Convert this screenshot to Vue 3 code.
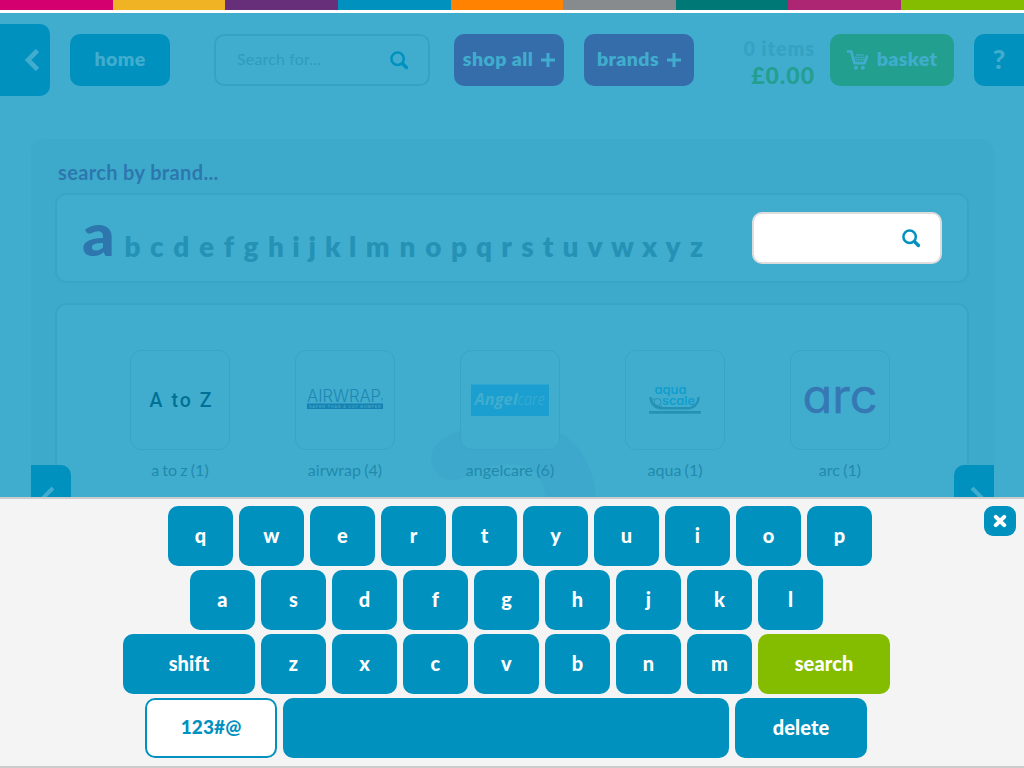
<script setup>
const stripes = ['pink', 'yellow', 'purple', 'blue', 'orange', 'grey', 'teal', 'magenta', 'lime']
const letters = 'bcdefghijklmnopqrstuvwxyz'.split('')
const brands = [
  { id: 'atoz', label: 'a to z (1)' },
  { id: 'airwrap', label: 'airwrap (4)' },
  { id: 'angelcare', label: 'angelcare (6)' },
  { id: 'aqua', label: 'aqua (1)' },
  { id: 'arc', label: 'arc (1)' },
]
const key = (t, cls = '') => ({ t, cls })
const rows = [
  { cls: 'r1', keys: 'qwertyuiop'.split('').map((c) => key(c)) },
  { cls: 'r2', keys: 'asdfghjkl'.split('').map((c) => key(c)) },
  { cls: 'r3', keys: [key('shift', 'wide'), ...'zxcvbnm'.split('').map((c) => key(c)), key('search', 'wide go')] },
  { cls: 'r4', keys: [key('123#@', 'wide alt'), key('', 'space'), key('delete', 'wide')] },
]
</script>

<template>
  <div class="page">
    <div class="stripes"><i v-for="s in stripes" :key="s" :class="s"></i></div>
    <header class="top">
      <button class="back">
        <svg width="16" height="22" viewBox="0 0 16 22"><path d="M13.500 1.500 4 11l9.500 9.500" fill="none" stroke="#40adce" stroke-width="4.6" /></svg>
      </button>
      <button class="btn home"><span>home</span></button>
      <div class="field main-search">
        <span class="ph">Search for...</span>
        <svg class="mag" width="19" height="19" viewBox="0 0 19 19"><circle cx="7.6" cy="7.7" r="6.2" fill="none" stroke="#0091bf" stroke-width="2.5" /><path d="m12.4 12.5 4 4" stroke="#0091bf" stroke-width="3.4" stroke-linecap="round" /></svg>
      </div>
      <button class="btn violet shop"><span>shop all</span><svg width="14" height="14" viewBox="0 0 14 14"><path d="M7 0v14M0 7h14" stroke="#40adce" stroke-width="3" /></svg></button>
      <button class="btn violet brands-btn"><span>brands</span><svg width="14" height="14" viewBox="0 0 14 14"><path d="M7 0v14M0 7h14" stroke="#40adce" stroke-width="3" /></svg></button>
      <div class="totals"><span class="items">0 items</span><span class="sum">£0.00</span></div>
      <button class="btn basket">
        <svg width="22" height="21" viewBox="0 0 22 21">
          <path d="M0 1.500h4.200L7.500 13.200h10L20.300 5.500" fill="none" stroke="#40adce" stroke-width="2.700" />
          <path d="M9 5h8M8 7.400h10M8.700 9.800h8.600" stroke="#40adce" stroke-width="1.500" stroke-dasharray="1.700 .7" />
          <circle cx="9" cy="17.800" r="2" fill="#40adce" /><circle cx="15.800" cy="17.800" r="2" fill="#40adce" />
        </svg>
        <span>basket</span>
      </button>
      <button class="help">?</button>
    </header>

    <main class="panel">
      <h2>search by brand...</h2>
      <section class="box alphabet">
        <b class="current">a</b>
        <div class="letters"><span v-for="l in letters" :key="l">{{ l }}</span></div>
        <div class="field brand-search">
          <svg class="mag" width="19" height="19" viewBox="0 0 19 19"><circle cx="7.6" cy="7.7" r="6.2" fill="none" stroke="#0091bf" stroke-width="2.5" /><path d="m12.4 12.5 4 4" stroke="#0091bf" stroke-width="3.4" stroke-linecap="round" /></svg>
        </div>
      </section>
      <section class="box results">
        <svg class="swirl" width="180" height="90" viewBox="425 415 180 90"><path d="M453 478c-15 0-22-11-22-22 0-14 15-22 30-28 16-6 74-12 100 3 20 12 36 36 36 80h-51c1-30-8-47-28-48-22-2-35 1-48 9q-8 6-17 6Z" fill="#3ea8cc" /></svg>
        <figure v-for="b in brands" :key="b.id">
          <div class="card">
            <svg width="98" height="98" viewBox="1 1 98 98">
              <text v-if="b.id === 'atoz'" class="atoz" x="19.500" y="57" textLength="62">A to Z</text>
              <template v-if="b.id === 'airwrap'">
                <text class="air" x="12" y="51.5" textLength="74" lengthAdjust="spacingAndGlyphs">AIRWRAP</text>
                <text class="tiny" x="86" y="51">®</text>
                <rect x="12" y="53.5" width="76" height="5.5" fill="#1781b3" />
                <text class="slogan" x="14" y="57.9" textLength="72">SAFER THAN A COT BUMPER</text>
              </template>
              <template v-if="b.id === 'angelcare'">
                <rect x="11" y="34.5" width="78" height="31.5" fill="#1b9fd1" />
                <text class="angel" x="14.5" y="54.5" textLength="43" lengthAdjust="spacingAndGlyphs">Angel</text>
                <text class="care" x="57.5" y="54.5" textLength="27" lengthAdjust="spacingAndGlyphs">care</text>
              </template>
              <template v-if="b.id === 'aqua'">
                <text class="aq" x="29.5" y="44" textLength="32" lengthAdjust="spacingAndGlyphs">aqua</text>
                <text class="aq" x="37" y="54.500" textLength="33" lengthAdjust="spacingAndGlyphs">scale</text>
                <path d="M25.5 47c0 7 5 11.300 12 11.300h24c7 0 12-4.300 12-11.300" fill="none" stroke="#2592b5" stroke-width="2.400" />
                <rect x="24" y="61" width="52" height="2.700" fill="#2592b5" />
                <circle cx="32.500" cy="52" r="3.500" fill="none" stroke="#2592b5" stroke-width="1" />
                <path d="M29 48l-2 3M30 55q3 3 7 1" fill="none" stroke="#2592b5" stroke-width="1" />
              </template>
              <text v-if="b.id === 'arc'" class="arc" x="12.500" y="62.500" textLength="75" lengthAdjust="spacingAndGlyphs">arc</text>
            </svg>
          </div>
          <figcaption>{{ b.label }}</figcaption>
        </figure>
      </section>
      <button class="tab prev"><svg width="16" height="22" viewBox="0 0 16 22"><path d="M13 2 4 11l9 9" fill="none" stroke="#40adce" stroke-width="4" /></svg></button>
      <button class="tab next"><svg width="16" height="22" viewBox="0 0 16 22"><path d="m3 2 9 9-9 9" fill="none" stroke="#40adce" stroke-width="4" /></svg></button>
    </main>

    <div class="keyboard">
      <div v-for="r in rows" :key="r.cls" class="row" :class="r.cls">
        <button v-for="(k, i) in r.keys" :key="i" class="key" :class="k.cls">{{ k.t }}</button>
      </div>
      <button class="close"><svg width="14" height="14" viewBox="0 0 14 14"><path d="m2.800 2.800 8.400 8.400m0-8.400-8.400 8.400" stroke="#fff" stroke-width="4" stroke-linecap="round" /></svg></button>
    </div>
  </div>
</template>

<style>
body { margin: 0; overflow: hidden; }
</style>

<style scoped>
* { box-sizing: border-box; }
button { border: 0; padding: 0; margin: 0; font: inherit; color: inherit; }
svg { display: block; flex: none; }
.page { width: 1024px; height: 768px; overflow: hidden; position: relative; display: flex; flex-direction: column; background: #40adce; font-family: Lato, sans-serif; color: #40adce; }
.stripes { display: flex; height: 13px; flex: none; border-bottom: 3px solid #fff; }
.stripes i { width: 112.64px; flex: none; }
.stripes i:last-child { flex: 1; }
.pink { background: #d4006f; } .yellow { background: #f0b323; } .purple { background: #672f79; }
.blue { background: #0091bf; } .orange { background: #ff8300; } .grey { background: #888b8d; }
.teal { background: #007875; } .magenta { background: #ad2673; } .lime { background: #84bd00; }

.top { display: flex; align-items: flex-start; height: 126px; flex: none; padding-top: 21px; }
.back { width: 50px; height: 72px; margin: -10px 20px 0 0; background: #0091bf; border-radius: 0 10px 10px 0; padding-left: 24px; flex: none; }
.btn { height: 52px; border-radius: 10px; display: flex; align-items: center; justify-content: center; font-size: 19.5px; font-weight: 800; letter-spacing: .4px; flex: none; }
.btn span { padding-bottom: 3px; }
.home { width: 100px; background: #0091bf; margin-right: 44px; }
.field { border: 2px solid #36a2c3; border-radius: 10px; display: flex; align-items: center; flex: none; }
.main-search { width: 216px; height: 52px; margin-right: 24px; padding: 0 19px 0 21px; justify-content: space-between; font-size: 16px; letter-spacing: .15px; color: #2f9bbd; }
.ph { padding-bottom: 3px; }
.violet { width: 110px; background: #356dab; gap: 8px; margin-right: 20px; }
.totals { width: 101px; margin-right: 15px; padding: 2px 0 0; display: flex; flex-direction: column; align-items: flex-end; font-weight: 800; }
.items { font-size: 20px; line-height: 25px; letter-spacing: .8px; color: #36a2c3; }
.sum { font-size: 23px; line-height: 28px; letter-spacing: 1px; font-weight: 900; color: #239f90; }
.basket { width: 124px; background: #239f90; gap: 8px; margin: 0 20px 0 0; }
.help { width: 50px; height: 52px; border-radius: 10px 0 0 10px; background: #0091bf; font-size: 27px; font-weight: 900; padding-bottom: 3px; flex: none; }

.panel { position: relative; width: 963px; height: 358px; margin-left: 31px; padding: 0 25px 0 24px; background: #3daacb; border-radius: 12px 12px 0 0; overflow: hidden; flex: none; }
h2 { margin: 0; height: 54px; padding: 20px 0 0 3px; font-size: 20px; line-height: 26px; letter-spacing: .36px; font-weight: 700; color: #2d77ae; }
.box { border: 2px solid #39a5c6; border-radius: 11px; background: #40adce; }
.alphabet { height: 90px; display: flex; position: relative; padding-left: 24px; }
.current { width: 39px; font-size: 59px; line-height: 60px; padding: 9px 0 0 1px; font-weight: 900; color: #2d77ae; transform: scaleX(1.09); transform-origin: left; }
.letters { display: grid; grid-template-columns: 25px 23.5px 25.5px 25px 19.5px 25px 25px 15px 17.5px 23.5px 16.5px 33.5px 26px 26px 25px 25px 20px 22px 19.5px 25px 24px 31px 23px 24px 23px; text-align: center; font-size: 28px; line-height: 34px; padding-top: 34px; font-weight: 800; color: #2592b5; width: 588px; }
.brand-search { width: 190px; height: 52px; margin: 17px 0 0 44px; background: #fff; border-color: #ddd; justify-content: flex-end; padding-right: 19px; }
.results { position: relative; margin-top: 20px; height: 240px; padding: 45px 0 0 73px; display: flex; gap: 65px; }
.swirl { position: absolute; left: 368px; top: 112px; }
figure { position: relative; margin: 0; width: 100px; flex: none; }
.card { width: 100px; height: 100px; border: 1px solid #39a5c6; border-radius: 11px; background: #40adce; overflow: hidden; }
figcaption { width: 140px; margin: 8px 0 0 -20px; text-align: center; font-size: 16px; line-height: 24px; letter-spacing: .05px; word-spacing: -1px; color: #2289ac; }
.tab { position: absolute; top: 326px; width: 40px; height: 60px; background: #0091bf; }
.prev { left: 0; border-radius: 0 10px 0 0; padding: 4px 0 0 9px; }
.next { right: 0; border-radius: 10px 0 0 0; padding: 4px 0 0 15px; }

.atoz { font: 500 19.5px Roboto, sans-serif; fill: #007195; }
.air { font: 300 17.500px Inter, sans-serif; fill: #2186b4; }
.tiny { font: 3px Inter, sans-serif; fill: #2186b4; }
.slogan { font: 700 4px "Liberation Sans", sans-serif; fill: #3aa5c9; }
.angel { font: italic 700 15.5px "Open Sans", sans-serif; fill: #40adce; }
.care { font: italic 300 15.5px "Open Sans", sans-serif; fill: #40adce; }
.aq { font: 600 11.500px Inter, sans-serif; fill: #119dcd; font-feature-settings: "cv11"; }
.arc { font: 400 47px Inter, sans-serif; fill: #3678b4; stroke: #3678b4; stroke-width: .5px; stroke-linejoin: round; font-feature-settings: "cv11"; }

.keyboard { position: relative; height: 271px; flex: none; border-top: 2px solid #ccc; border-bottom: 2px solid #ccc; background: #f4f4f4; padding-top: 7px; display: flex; flex-direction: column; gap: 4px; }
.row { display: flex; gap: 6px; height: 60px; }
.r1 { padding-left: 168px; } .r2 { padding-left: 190px; } .r3 { padding-left: 123px; } .r4 { padding-left: 145px; }
.key { width: 65px; height: 60px; padding-bottom: 2px; border-radius: 10px; background: #0091bf; color: #fff; font-size: 20px; font-weight: 900; line-height: 24px; letter-spacing: .1px; flex: none; }
.wide { width: 132px; }
.go { background: #84bd00; }
.alt { background: #fff; color: #0091bf; border: 2px solid #0091bf; font-size: 19px; }
.space { width: 446px; }
.close { position: absolute; left: 984px; top: 7px; width: 32px; height: 30px; border-radius: 9px; background: #0091bf; display: flex; align-items: center; justify-content: center; }
</style>
